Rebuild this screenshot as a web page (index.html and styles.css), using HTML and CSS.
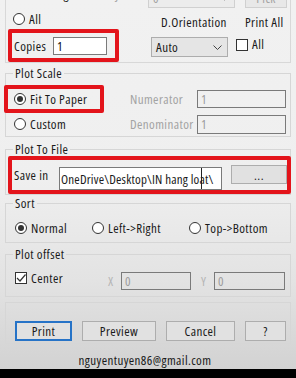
FILE: index.html
```html
<!DOCTYPE html>
<html>
<head>
<meta charset="utf-8">
<link rel="stylesheet" href="styles.css">
</head>
<body>
<div class="win">
  <div class="upper">
    <div class="row row-a">
      <div class="cell1">
        <span class="radio"></span><span class="lbl">Drawing</span>
        <span class="lbl dis layout">Layout</span>
      </div>
      <div class="combo combo-dis"><span>0</span><svg class="chev" width="9" height="5" viewBox="0 0 9 5"><path d="M0.5 0.5 L4.5 4.5 L8.5 0.5" fill="none" stroke="#b0b0b0"/></svg></div>
      <div class="btn dis pick">Pick</div>
    </div>
    <div class="row row-b">
      <div class="cell1"><span class="radio"></span><span class="lbl">All</span></div>
      <span class="lbl orient">D.Orientation</span>
      <span class="lbl">Print All</span>
    </div>
    <div class="row row-c">
      <div class="hl copies"><span class="lbl">Copies</span><div class="input white w-copies">1</div></div>
      <div class="combo combo-auto"><span>Auto</span><svg class="chev" width="9" height="5" viewBox="0 0 9 5"><path d="M0.5 0.5 L4.5 4.5 L8.5 0.5" fill="none" stroke="#444"/></svg></div>
      <span class="check chk-all"></span><span class="lbl lbl-all">All</span>
    </div>
  </div>

  <fieldset class="grp grp-scale">
    <legend>Plot Scale</legend>
    <div class="scale-grid">
      <div class="hl fit"><span class="radio on"></span><span class="lbl">Fit To Paper</span></div>
      <span class="lbl dis">Numerator</span>
      <div class="input dis in-num">1</div>
      <div class="opt opt-custom"><span class="radio"></span><span class="lbl">Custom</span></div>
      <span class="lbl dis">Denominator</span>
      <div class="input dis in-den">1</div>
    </div>
  </fieldset>

  <fieldset class="grp grp-file">
    <legend>Plot To File</legend>
    <div class="hl file">
      <span class="lbl save-lbl">Save in</span>
      <div class="input white in-path">OneDrive\Desktop\IN hang loat\<span class="ibeam"></span></div>
      <div class="btn browse">...</div>
    </div>
  </fieldset>

  <fieldset class="grp grp-sort">
    <legend>Sort</legend>
    <div class="row sort-row">
      <div class="opt sort1"><span class="radio on"></span><span class="lbl">Normal</span></div>
      <div class="opt sort2"><span class="radio"></span><span class="lbl">Left-&gt;Right</span></div>
      <div class="opt"><span class="radio"></span><span class="lbl">Top-&gt;Bottom</span></div>
    </div>
  </fieldset>

  <fieldset class="grp grp-offset">
    <legend>Plot offset</legend>
    <div class="row offset-row">
      <div class="opt center-cell"><span class="check checked"><svg width="10" height="10" viewBox="0 0 10 10"><path d="M1 5 L4 8 L9.5 1.5" fill="none" stroke="#333" stroke-width="1.2"/></svg></span><span class="lbl">Center</span></div>
      <span class="lbl xy">X</span>
      <div class="input dis in-x">0</div>
      <span class="lbl xy ylbl">Y</span>
      <div class="input dis in-y">0</div>
    </div>
  </fieldset>

  <div class="grp-plain">
    <div class="btn b-print">Print</div>
    <div class="btn b-preview">Preview</div>
    <div class="btn b-cancel">Cancel</div>
    <div class="btn b-help">?</div>
  </div>

  <div class="email">nguyentuyen86@gmail.com</div>
</div>
</body>
</html>
```

FILE: styles.css
```css
* { box-sizing: border-box; }
html, body { margin: 0; padding: 0; background: #000; }
body {
  font-family: "Open Sans", "Noto Sans", sans-serif;
  font-stretch: 87.5%;
  font-size: 13px;
  letter-spacing: 0.4px;
  color: #1a1a1a;
}
.win {
  width: 296px;
  height: 369px;
  overflow: hidden;
  background: linear-gradient(#f1f1f1 0, #efefef 180px, #e3e3e3 280px, #d2d2d2 369px);
}
.row { display: flex; align-items: center; }
.lbl { line-height: 14px; white-space: nowrap; }
.dis { color: #a3a3a3; }
.radio {
  width: 12px; height: 12px; border: 1px solid #333; border-radius: 50%;
  background: #fff; flex: none; display: flex; align-items: center; justify-content: center;
  margin-right: 4px;
}
.radio.on::after { content: ""; width: 6px; height: 6px; border-radius: 50%; background: #333; }
.check {
  width: 12px; height: 12px; border: 1px solid #333; background: #fff; flex: none;
  display: flex; align-items: center; justify-content: center;
}
.checked { margin-right: 4px; }
.opt { display: flex; align-items: center; }
.hl { border: 4px solid #e3141b; border-radius: 2px; display: flex; align-items: center; }

.combo {
  display: flex; align-items: center; justify-content: space-between;
  border: 1px solid #adadad; background: #e5e5e5; padding: 0 5px 0 4px;
}
.btn {
  display: flex; align-items: center; justify-content: center;
  border: 1px solid #adadad; background: #e1e1e1; line-height: 14px;
}
.btn.dis { border-color: #d0d0d0; background: #e8e8e8; }
.input {
  border: 1px solid #7a7a7a; display: flex; align-items: center; padding-left: 3px;
  white-space: nowrap; overflow: hidden; line-height: 14px;
}
.input.white { background: #fff; }
.input.dis { background: transparent; color: #9c9c9c; }

/* upper group */
.upper { margin: 0 5px; border: 1px solid #d8d8d8; border-top: 0; }
.row-a { height: 20px; margin-top: -12px; }
.cell1 { width: 142px; display: flex; align-items: center; padding-left: 7px; flex: none; }
.row-a .cell1 { margin-top: -8px; }
.layout { margin-left: auto; padding-right: 12px; }
.combo-dis { width: 87px; height: 20px; background: #ececec; border-color: #d0d0d0; color: #a3a3a3; }
.pick { margin-left: 10px; width: 42px; height: 20px; color: #a3a3a3; }
.row-b { height: 17px; margin-top: 4px; align-items: flex-end; }
.row-b .cell1 { align-self: flex-start; }
.orient { width: 84px; margin-left: 13px; }
.row-c { height: 33px; }
.copies { margin-left: 2px; width: 111px; height: 33px; padding-left: 2px; }
.w-copies { margin-left: auto; margin-right: 8px; width: 54px; height: 18px; color: #111; }
.combo-auto { margin-left: 32px; width: 77px; height: 20px; margin-top: 3px; }
.chk-all { margin-left: 8px; align-self: flex-start; margin-top: 10px; }
.lbl-all { margin-left: 4px; align-self: flex-start; margin-top: 8px; }

/* group boxes */
.grp {
  margin: 0 5px; padding: 0; border: 1px solid #d6d6d6; min-width: 0;
}
.grp legend { padding: 0 2px; margin-left: 7px; line-height: 14px; font-size: 13px; }
.grp-scale { margin-top: 3px; }
.scale-grid {
  display: grid; grid-template-columns: 124px 67px 89px; grid-template-rows: 28px 22px;
  align-items: center; padding-top: 5px; padding-bottom: 1px;
}
.fit { margin-left: -2px; width: 100px; height: 28px; padding-left: 6px; }
.in-num { height: 18px; }
.in-den { height: 19px; }
.opt-custom { padding-left: 8px; }

.grp-file { margin-top: 5px; }
.file { margin-left: 2px; margin-right: -1px; height: 38px; align-items: stretch; padding-left: 2px; }
.save-lbl { width: 45px; align-self: center; }
.in-path { width: 163px; height: 23px; align-self: flex-end; padding-left: 1px; position: relative; letter-spacing: 0.2px; }
.ibeam { position: absolute; left: 141px; top: 0; width: 1px; height: 22px; background: #222; }
.browse { margin-left: 9px; width: 56px; height: 19px; align-self: flex-start; margin-top: 5px; }

.grp-sort { margin-top: 1px; }
.sort-row { height: 14px; margin-top: 11px; margin-bottom: 7px; padding-left: 9px; }
.sort1 { width: 77px; }
.sort2 { width: 97px; }

.grp-offset { margin-top: 4px; }
.offset-row { height: 18px; margin-top: 11px; margin-bottom: 6px; padding-left: 9px; }
.center-cell { width: 92px; align-self: flex-start; margin-top: -1px; height: 14px; }
.xy { width: 14px; color: #b5b5b5; padding-left: 1px; }
.ylbl { margin-left: 9px; }
.in-x { width: 70px; height: 18px; }
.in-y { width: 71px; height: 18px; }

.grp-plain {
  margin: 5px 5px 0; border: 1px solid #d6d6d6; display: flex; gap: 10px;
  padding: 18px 0 2px 9px;
}
.grp-plain .btn { height: 20px; }
.b-print { width: 57px; border: 2px solid #2673c7; }
.b-preview { width: 74px; }
.b-cancel { width: 69px; }
.b-help { width: 41px; }

.email { margin-top: 9px; line-height: 14px; text-align: center; padding-right: 6px; }
```
